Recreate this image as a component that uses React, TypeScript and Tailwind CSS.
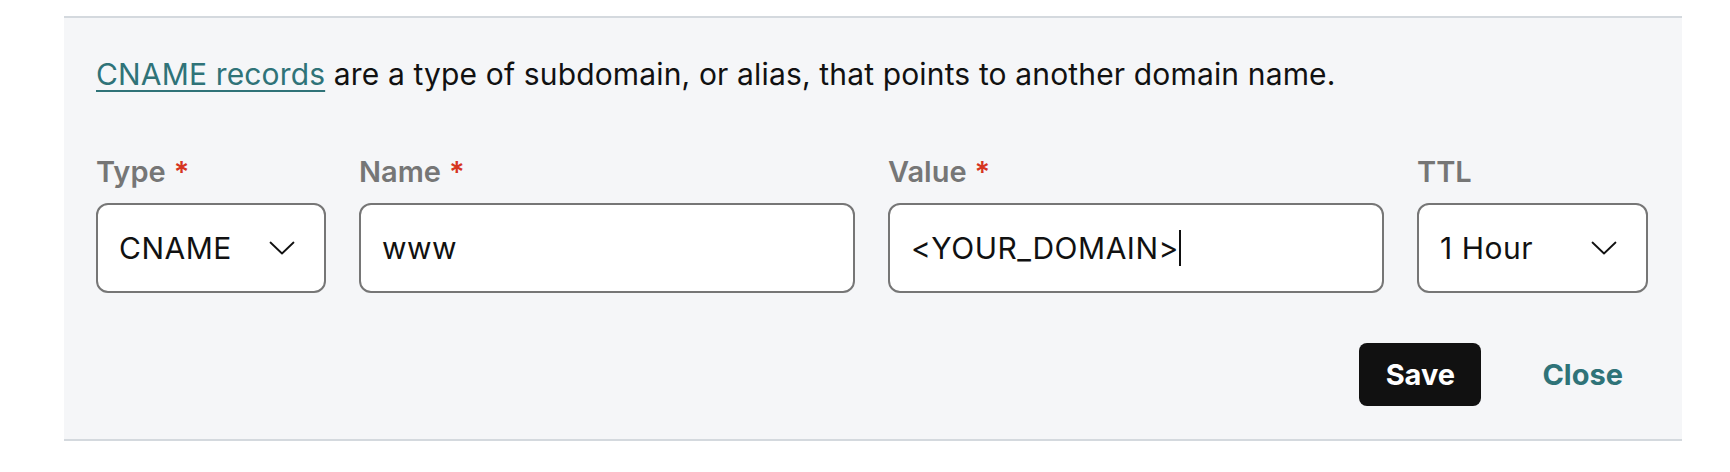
const font = { fontFamily: 'Inter, "Liberation Sans", Arial, sans-serif' };

function Chevron() {
  return (
    <svg width="26" height="14" viewBox="0 0 26 14" fill="none" className="shrink-0">
      <polyline points="1.5,1.5 13,12.5 24.5,1.5" stroke="#111111" strokeWidth="1.8" strokeLinecap="round" strokeLinejoin="round" />
    </svg>
  );
}

function Label({ text, required }: { text: string; required?: boolean }) {
  return (
    <div className="text-[29px] leading-[36px] font-semibold text-[#767676] mb-[13px]">
      {text}
      {required && <span className="text-[#d6351f] ml-[8px]">*</span>}
    </div>
  );
}

export default function App() {
  return (
    <div className="min-h-screen bg-white pt-[16px]" style={font}>
      {/* record form panel */}
      <div className="ml-16 w-[1618px] bg-[#f5f6f8] border-t-2 border-b-2 border-[#d4d9de] px-8 pt-[38px] pb-[33px]">
        <p className="text-[30px] leading-[36px] tracking-[0.15px] text-[#111111]">
          <a href="#" className="text-[#2f7378] underline underline-offset-[5px] decoration-2">
            CNAME records
          </a>{" "}
          are a type of subdomain, or alias, that points to another domain name.
        </p>

        <div className="mt-[62px] grid grid-cols-[230px_496px_496px_231px] gap-x-[33px]">
          <div>
            <Label text="Type" required />
            <div className="h-[90px] rounded-[12px] border-2 border-[#767676] bg-white flex items-center justify-between pl-[21px] pr-[29px] text-[30px] tracking-[0.5px] text-[#111111]">
              <span>CNAME</span>
              <Chevron />
            </div>
          </div>
          <div>
            <Label text="Name" required />
            <div className="h-[90px] rounded-[12px] border-2 border-[#767676] bg-white flex items-center pl-[21px] text-[30px] tracking-[0.5px] text-[#111111]">
              www
            </div>
          </div>
          <div>
            <Label text="Value" required />
            <div className="h-[90px] rounded-[12px] border-2 border-[#767676] bg-white flex items-center pl-[21px] text-[30px] tracking-[0.5px] text-[#111111]">
              <span>&lt;YOUR_DOMAIN&gt;</span>
              <span className="w-[2px] h-[36px] bg-[#111111]" />
            </div>
          </div>
          <div>
            <Label text="TTL" />
            <div className="h-[90px] rounded-[12px] border-2 border-[#767676] bg-white flex items-center justify-between pl-[21px] pr-[29px] text-[30px] tracking-[0.5px] text-[#111111]">
              <span>1 Hour</span>
              <Chevron />
            </div>
          </div>
        </div>

        <div className="mt-[50px] flex justify-end items-center">
          <button className="w-[122px] h-[63px] rounded-[8px] bg-[#111111] text-white text-[29px] font-bold">
            Save
          </button>
          <button className="h-[63px] pl-[61px] pr-[27px] text-[#2f7378] text-[29px] font-bold">
            Close
          </button>
        </div>
      </div>
    </div>
  );
}
